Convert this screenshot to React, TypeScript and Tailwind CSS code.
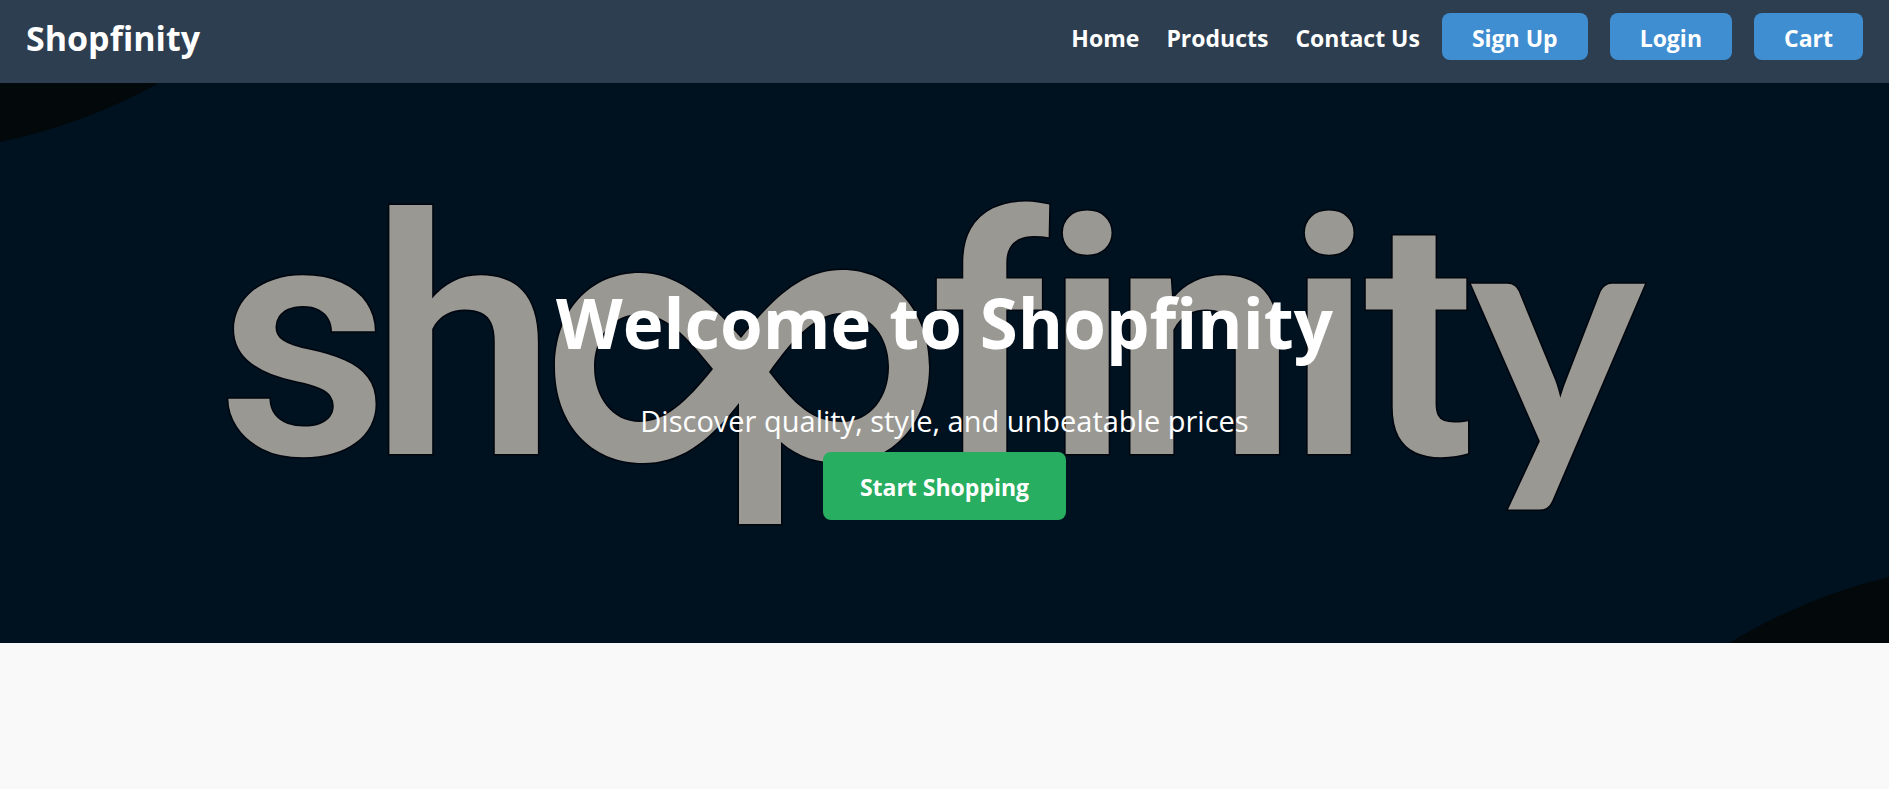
const links = ["Home", "Products", "Contact Us"];
const actions = ["Sign Up", "Login", "Cart"];

function HeroArt() {
  return (
    <svg
      className="absolute inset-0 h-full w-full"
      viewBox="0 0 1889 560"
      preserveAspectRatio="xMidYMid slice"
      aria-hidden="true"
    >
      {/* Corner arcs */}
      <path d="M0 0H159Q85 41 0 59Z" fill="#03090b" />
      <path d="M1889 494Q1805 514 1729 560H1889Z" fill="#03090b" />

      <g
        fill="#999893"
        stroke="#00060e"
        strokeWidth="3"
        paintOrder="stroke"
        className="font-['Roboto'] text-[332px] font-semibold"
      >
        <text x="218 371" y="371">sh</text>

        {/* Infinity mark */}
        <path
          fillRule="evenodd"
          d="M640 190C674 190 704 212 741 255C778 209 806 187 842 187C892 187 929 228 929 284C929 340 892 380 842 380C818 380 798 374 781 359V441H739V320C706 362 678 380 643 380C590 380 555 340 555 284C555 228 590 190 640 190ZM640 231C612 231 594 254 594 284C594 314 612 339 640 339C664 339 686 320 713 286C686 252 666 231 640 231ZM769 289C796 324 814 339 842 339C871 339 889 314 889 284C889 254 871 230 842 230C816 230 794 254 769 289Z"
        />

        <text x="931 1044 1112 1286 1364" y="371">finit</text>
        <text x="1470" y="371" className="font-['Lato'] font-bold">y</text>
      </g>
    </svg>
  );
}

export default function App() {
  return (
    <div className="min-h-screen bg-[#f9f9f9] font-['Open_Sans',sans-serif] text-white">
      <header className="flex items-start justify-between bg-[#2d3e50] px-[26px] pt-[13px] pb-[23px]">
        <a href="#" className="pt-1 text-[34px] leading-[43px] font-bold">
          Shopfinity
        </a>
        <nav className="flex items-center gap-[22px] text-[23px] leading-[43px] font-bold">
          <div className="flex gap-[27px] pt-1">
            {links.map((link) => (
              <a key={link} href="#">
                {link}
              </a>
            ))}
          </div>
          {actions.map((action) => (
            <button key={action} className="rounded-lg bg-[#3f8ed1] px-[30px] pt-1">
              {action}
            </button>
          ))}
        </nav>
      </header>

      <section className="relative flex h-[560px] flex-col items-center bg-[#00111f] pt-[191px] text-center">
        <HeroArt />
        <div className="relative flex flex-col items-center">
          <h1 className="text-[69px] leading-[96px] font-bold">
            Welcome to Shopfinity
          </h1>
          <p className="mt-[30px] text-[29px] leading-[42px]">
            Discover quality, style, and unbeatable prices
          </p>
          <button className="mt-[10px] rounded-lg bg-[#28ae60] px-[37px] pt-0.5 text-[23px] leading-[66px] font-bold">
            Start Shopping
          </button>
        </div>
      </section>
    </div>
  );
}
